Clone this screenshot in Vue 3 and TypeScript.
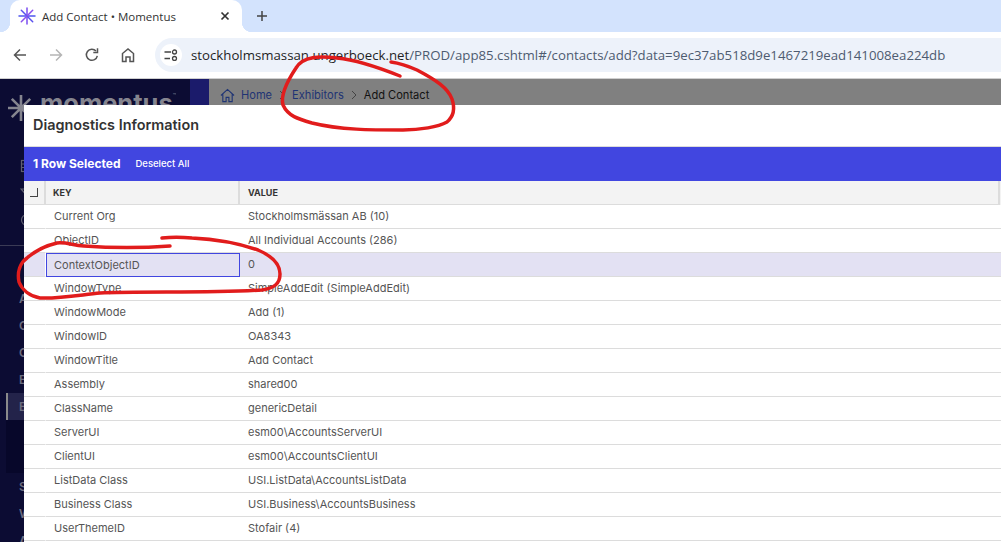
<script setup lang="ts">
interface Row { key: string; value: string; selected?: boolean }
const rows: Row[] = [
  { key: 'Current Org', value: 'Stockholmsmässan AB (10)' },
  { key: 'ObjectID', value: 'All Individual Accounts (286)' },
  { key: 'ContextObjectID', value: '0', selected: true },
  { key: 'WindowType', value: 'SimpleAddEdit (SimpleAddEdit)' },
  { key: 'WindowMode', value: 'Add (1)' },
  { key: 'WindowID', value: 'OA8343' },
  { key: 'WindowTitle', value: 'Add Contact' },
  { key: 'Assembly', value: 'shared00' },
  { key: 'ClassName', value: 'genericDetail' },
  { key: 'ServerUI', value: 'esm00\\AccountsServerUI' },
  { key: 'ClientUI', value: 'esm00\\AccountsClientUI' },
  { key: 'ListData Class', value: 'USI.ListData\\AccountsListData' },
  { key: 'Business Class', value: 'USI.Business\\AccountsBusiness' },
  { key: 'UserThemeID', value: 'Stofair (4)' },
]
const upperNav = ['A', 'C', 'C', 'E', 'E']
const lowerNav = ['S', 'W', 'A']
</script>

<template>
  <div class="screen">
    <header class="tabstrip">
      <div class="tab">
        <svg class="favicon" width="18" height="18" viewBox="0 0 18 18" fill="none" stroke-width="1.5" stroke-linecap="round">
          <path d="M9 1v16" stroke="#7a4df0" />
          <path d="M1 9h16" stroke="#4f55ee" />
          <path d="M3.3 3.3l11.4 11.4" stroke="#5a50ee" />
          <path d="M14.7 3.3L3.3 14.7" stroke="#8a50ee" />
        </svg>
        <span class="tab-title">Add Contact • Momentus</span>
        <svg class="tab-close" width="10" height="10" viewBox="0 0 10 10" fill="none" stroke="#333" stroke-width="1.7">
          <path d="M1.5 1.5l7 7M8.5 1.5l-7 7" />
        </svg>
      </div>
      <svg class="new-tab" width="12" height="12" viewBox="0 0 12 12" fill="none" stroke="#444" stroke-width="1.5">
        <path d="M6 1v10M1 6h10" />
      </svg>
    </header>

    <div class="toolbar">
      <svg class="tool" width="16" height="16" viewBox="0 0 16 16" fill="none" stroke="#555" stroke-width="1.5">
        <path d="M14 8H2.5M8 2.5L2.5 8 8 13.5" />
      </svg>
      <svg class="tool" width="16" height="16" viewBox="0 0 16 16" fill="none" stroke="#b5b5b5" stroke-width="1.5">
        <path d="M2 8h11.5M8 2.5L13.5 8 8 13.5" />
      </svg>
      <svg class="tool" width="16" height="16" viewBox="0 0 16 16" fill="none" stroke="#555" stroke-width="1.5">
        <path d="M13.3 8.8A5.5 5.5 0 1 1 12 4.1" />
        <path d="M13.5 1.2v4.2H9.3" />
      </svg>
      <svg class="tool" width="16" height="16" viewBox="0 0 16 16" fill="none" stroke="#555" stroke-width="1.5">
        <path d="M2.5 14.5V6.5L8 2l5.500 4.500v8H10V10H6v4.500z" />
      </svg>
      <div class="omnibox">
        <span class="site-info">
          <svg width="14" height="12" viewBox="0 0 14 12" fill="none" stroke="#444" stroke-width="1.3">
            <path d="M0.5 3h6.500M0.5 9.500h5.500" />
            <circle cx="10.5" cy="3" r="2" />
            <circle cx="10.5" cy="9.5" r="2" />
          </svg>
        </span>
        <span class="url"><span class="host">stockholmsmassan.ungerboeck.net</span>/PROD/app85.cshtml#/contacts/add?data=9ec37ab518d9e1467219ead141008ea224db</span>
      </div>
    </div>

    <div class="page">
      <aside class="sidebar">
        <div class="brand">
          <svg class="brand-star" width="28" height="28" viewBox="0 0 28 28" fill="none" stroke="#85858f" stroke-width="2.6">
            <path d="M14 1v26M1 14h26M4.800 4.800l18.400 18.400M23.200 4.800L4.800 23.200" />
          </svg>
          <span class="brand-name">momentus<sup class="tm">™</sup></span>
        </div>
        <div class="nav-top">
          <svg width="14" height="14" viewBox="0 0 14 14" fill="none" stroke="#5f5f70" stroke-width="1.2">
            <rect x="1.5" y="1.5" width="11" height="11" />
            <path d="M1.5 5h11M1.5 8.500h11" />
          </svg>
          <svg width="14" height="14" viewBox="0 0 14 14" fill="none" stroke="#5f5f70" stroke-width="1.2">
            <path d="M1 3h12L8.500 8v4l-3-1.500V8z" />
          </svg>
          <svg width="14" height="14" viewBox="0 0 14 14" fill="none" stroke="#5f5f70" stroke-width="1.2">
            <circle cx="7" cy="7" r="5.500" />
          </svg>
        </div>
        <div class="nav-divider"></div>
        <nav class="nav-list">
          <div v-for="(item, i) in upperNav" :key="i" class="nav-item" :class="{ active: i === upperNav.length - 1 }">{{ item }}</div>
          <div class="submenu"></div>
          <div v-for="(item, i) in lowerNav" :key="i" class="nav-item">{{ item }}</div>
        </nav>
      </aside>

      <main class="content">
        <div class="rail"></div>
        <div class="crumbs">
          <svg width="15" height="15" viewBox="0 0 16 16" fill="none" stroke="#1f3474" stroke-width="1.2">
            <path d="M1 8l7-6.500L15 8M3 6.500V14.500h3.500V10h3v4.500H13V6.500" />
          </svg>
          <span class="crumb-link home">Home</span>
          <svg class="chev" width="6" height="10" viewBox="0 0 6 10" fill="none" stroke="#444" stroke-width="1">
            <path d="M1 1l4 4-4 4" />
          </svg>
          <span class="crumb-link">Exhibitors</span>
          <svg class="chev" width="6" height="10" viewBox="0 0 6 10" fill="none" stroke="#444" stroke-width="1">
            <path d="M1 1l4 4-4 4" />
          </svg>
          <span class="crumb-current">Add Contact</span>
        </div>
      </main>

      <section class="modal">
        <h1 class="modal-title">Diagnostics Information</h1>
        <div class="selection-bar">
          <strong>1 Row Selected</strong>
          <span class="deselect">Deselect All</span>
        </div>
        <div class="row head">
          <div class="cell check"><span class="checkbox"></span></div>
          <div class="cell">KEY</div>
          <div class="cell last">VALUE</div>
        </div>
        <div v-for="row in rows" :key="row.key" class="row" :class="{ selected: row.selected }">
          <div class="cell check"></div>
          <div class="cell key">{{ row.key }}</div>
          <div class="cell">{{ row.value }}</div>
        </div>
      </section>
    </div>

    <svg class="ink" width="1001" height="542" viewBox="0 0 1001 542" fill="none" stroke="#e11c1c" stroke-width="3.5" stroke-linecap="round" stroke-linejoin="round">
      <path d="M400 76C380 68 358 60 337 58C320 56 303 56 296 68C288 80 280 94 283 105C288 116 298 119 312 123C340 130 372 130 403 130C420 130 438 127 447 122C454 116 455 108 452 99C448 88 436 80 417 70C408 66 398 63 391 62" />
      <path d="M162 238C172 237 180 237 192 238C212 239 238 243 258 250C272 256 280 264 280 274C280 284 274 288 262 290C230 292 198 292 167 292C140 292 116 292 100 293C80 295 58 299 40 298C30 296 22 290 19 282C17 272 20 263 27 258C34 252 44 246 57 243C66 242 72 245 84 246C112 248 142 248 170 246" />
    </svg>
  </div>
</template>

<style>
html, body { margin: 0; overflow: hidden; background: #fff; }
</style>

<style scoped>
.screen {
  position: relative;
  width: 1001px;
  height: 542px;
  overflow: hidden;
  display: flex;
  flex-direction: column;
  font-family: Inter, "Liberation Sans", sans-serif;
}
.tabstrip {
  height: 32px;
  flex: none;
  background: #d3e3fd;
  display: flex;
  align-items: center;
}
.tab {
  position: relative;
  width: 232px;
  height: 32px;
  margin-left: 10px;
  box-sizing: border-box;
  padding: 0 12px 0 8px;
  background: #fff;
  border-radius: 10px 10px 0 0;
  display: flex;
  align-items: center;
}
.tab::before, .tab::after {
  content: "";
  position: absolute;
  bottom: 0;
  width: 10px;
  height: 10px;
}
.tab::before { left: -10px; background: radial-gradient(circle at 0 0, #d3e3fd 10px, #fff 10.500px); }
.tab::after { right: -10px; background: radial-gradient(circle at 100% 0, #d3e3fd 10px, #fff 10.500px); }
.favicon { flex: none; }
.tab-title {
  margin-left: 6px;
  flex: 1;
  font-family: "Open Sans", sans-serif;
  font-size: 11.500px;
  color: #333;
  white-space: nowrap;
}
.tab-close { flex: none; }
.new-tab { margin-left: 14px; }
.toolbar {
  height: 47px;
  flex: none;
  box-sizing: border-box;
  border-bottom: 1px solid #cfcfcf;
  background: #fff;
  display: flex;
  align-items: center;
  padding: 0 0 0 12px;
  gap: 20px;
}
.tool { flex: none; }
.omnibox {
  flex: 1;
  height: 34px;
  margin-left: -1px;
  margin-right: -20px;
  background: #edf2fa;
  border-radius: 17px;
  display: flex;
  align-items: center;
  padding-left: 5px;
}
.site-info {
  width: 22px;
  height: 22px;
  flex: none;
  background: #fff;
  border-radius: 50%;
  display: flex;
  align-items: center;
  justify-content: center;
}
.url {
  margin-left: 9px;
  font-family: "Open Sans", sans-serif;
  font-size: 13.240px;
  color: #4d5b70;
  white-space: nowrap;
}
.host { color: #1f1f1f; }
.page {
  position: relative;
  flex: 1;
  display: flex;
  min-height: 0;
}
.sidebar {
  width: 190px;
  flex: none;
  background: #0c0c33;
  display: flex;
  flex-direction: column;
  overflow: hidden;
}
.brand {
  height: 74px;
  flex: none;
  box-sizing: border-box;
  padding-left: 7px;
  display: flex;
  align-items: flex-start;
  gap: 5px;
}
.brand-star { flex: none; margin-top: 15px; }
.brand-name {
  height: 26px;
  box-sizing: border-box;
  padding-top: 12px;
  overflow: hidden;
  font-size: 25.500px;
  line-height: 24px;
  font-weight: 700;
  color: #85858f;
}
.tm {
  font-size: 6px;
  font-weight: 400;
  line-height: 0;
  vertical-align: 14px;
}
.nav-top {
  display: flex;
  flex-direction: column;
  gap: 13px;
  padding-left: 20px;
  height: 92px;
  flex: none;
  box-sizing: border-box;
  padding-top: 6px;
}
.nav-divider {
  height: 1px;
  flex: none;
  background: #3b3b55;
}
.nav-list {
  margin-top: 39px;
  display: flex;
  flex-direction: column;
}
.nav-item {
  height: 27px;
  line-height: 27px;
  padding-left: 19px;
  font-size: 12px;
  font-weight: 600;
  color: #6d6d80;
}
.nav-item.active {
  margin-left: 6px;
  padding-left: 11px;
  border-left: 2px solid #8b8b8b;
  background: #23234a;
}
.submenu {
  height: 53px;
  margin-left: 6px;
  background: #07072a;
}
.content {
  flex: 1;
  display: flex;
  align-items: flex-start;
  background: #fff;
  min-width: 0;
}
.rail {
  width: 19px;
  height: 26px;
  flex: none;
  background: #1b1b6b;
}
.crumbs {
  flex: 1;
  height: 26px;
  box-sizing: border-box;
  padding: 6px 0 0 11px;
  background: #808080;
  display: flex;
  align-items: center;
  font-size: 11.100px;
  white-space: nowrap;
}
.crumb-link { color: #1f3474; }
.crumb-link.home { margin-left: 6px; }
.crumb-current { color: #111; }
.chev { flex: none; margin: 0 7px; }
.modal {
  position: absolute;
  left: 24px;
  right: 0;
  top: 26px;
  bottom: 0;
  background: #fff;
  overflow: hidden;
}
.modal-title {
  margin: 0;
  height: 42px;
  box-sizing: border-box;
  border-bottom: 1px solid #dcdcdc;
  padding-left: 9px;
  font-size: 14.400px;
  font-weight: 600;
  line-height: 40px;
  color: #333;
}
.selection-bar {
  height: 34px;
  box-sizing: border-box;
  padding: 0 0 2px 9px;
  background: #4146e0;
  color: #fff;
  display: flex;
  align-items: center;
  gap: 15px;
  font-size: 12px;
}
.selection-bar strong { font-weight: 700; }
.deselect { font-size: 9.500px; font-weight: 500; }
.row {
  display: grid;
  grid-template-columns: 22px 194px 1fr;
  height: 24px;
  font-size: 11px;
  color: #555;
}
.cell {
  box-sizing: border-box;
  border-bottom: 1px solid #dcdcdc;
  padding-left: 8px;
  line-height: 23px;
  white-space: nowrap;
}
.cell.check { border-right: 1px solid #fff; }
.row.head { background: #f3f3f3; font-size: 9px; font-weight: 700; color: #333; }
.row.head .cell { border-right: 2px solid #dcdcdc; padding-left: 7px; }
.row.head .cell.last { margin-right: 1px; padding-left: 8px; }
.checkbox {
  display: block;
  width: 7px;
  height: 8px;
  margin: 7px 0 0 -1px;
  border-right: 1px solid #444;
  border-bottom: 1px solid #444;
}
.row.selected { background: #e3e1f3; }
.row.selected .key {
  border: 1px solid #4146e0;
  padding-left: 7px;
  line-height: 22px;
}
.ink {
  position: absolute;
  left: 0;
  top: 0;
  pointer-events: none;
}
</style>
